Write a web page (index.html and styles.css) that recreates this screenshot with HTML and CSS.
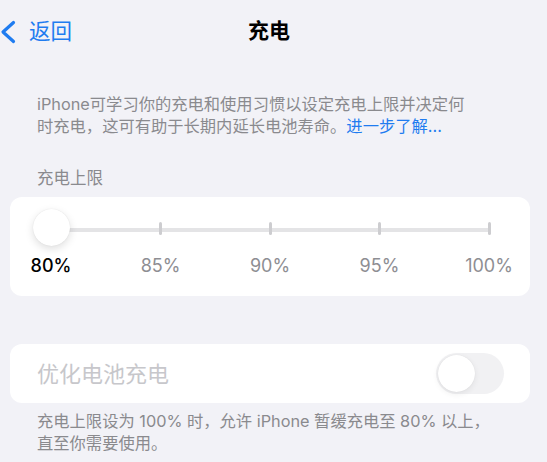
FILE: index.html
```html
<!DOCTYPE html>
<html lang="zh-CN">
<head>
<meta charset="utf-8">
<title>充电</title>
<link rel="stylesheet" href="styles.css">
</head>
<body>
  <header class="nav">
    <div class="nav-side">
      <a class="back" href="#">
        <svg class="chevron" width="16" height="24" viewBox="0 0 16 24" aria-hidden="true">
          <path d="M13.5 2.5 L3 12 L13.5 21.5" fill="none" stroke="currentColor" stroke-width="3.2" stroke-linecap="round" stroke-linejoin="round"/>
        </svg>
        <span>返回</span>
      </a>
    </div>
    <h1 class="nav-title">充电</h1>
    <div class="nav-side"></div>
  </header>

  <p class="note intro">iPhone可学习你的充电和使用习惯以设定充电上限并决定何<br>时充电，这可有助于长期内延长电池寿命。<a class="link" href="#">进一步了解...</a></p>

  <div class="section-label">充电上限</div>

  <section class="card limit-card">
    <div class="slider">
      <div class="track"></div>
      <span class="tick" style="left:25%"></span>
      <span class="tick" style="left:50%"></span>
      <span class="tick" style="left:75%"></span>
      <span class="tick" style="left:100%"></span>
      <span class="thumb"></span>
    </div>
    <div class="stops">
      <span class="stop active"><span>80%</span></span>
      <span class="stop"><span>85%</span></span>
      <span class="stop"><span>90%</span></span>
      <span class="stop"><span>95%</span></span>
      <span class="stop"><span>100%</span></span>
    </div>
  </section>

  <section class="card toggle-card">
    <span class="toggle-label">优化电池充电</span>
    <span class="switch"><span class="switch-knob"></span></span>
  </section>

  <p class="note footer">充电上限设为 100% 时，允许 iPhone 暂缓充电至 80% 以上，<br>直至你需要使用。</p>
</body>
</html>
```

FILE: styles.css
```css
* {
  box-sizing: border-box;
}

html, body {
  margin: 0;
  padding: 0;
}

body {
  background: #f2f2f7;
  font-family: "Inter", "Noto Sans CJK SC", "Noto Sans", sans-serif;
  color: #000;
  width: 547px;
  height: 462px;
  overflow: hidden;
}

/* navigation bar */
.nav {
  height: 62px;
  display: grid;
  grid-template-columns: 1fr auto 1fr;
  align-items: center;
  padding-right: 9px;
}

.nav-side {
  display: flex;
  align-items: center;
}

.back {
  display: flex;
  align-items: center;
  gap: 13px;
  color: #1f7cf0;
  text-decoration: none;
  font-size: 21.5px;
  line-height: 26px;
}

.chevron {
  display: block;
  margin-top: 1px;
}

.nav-title {
  margin: 0;
  font-size: 21px;
  font-weight: 700;
  line-height: 26px;
}

/* grey explanatory text */
.note {
  margin: 0;
  padding: 0 37px;
  font-size: 16.3px;
  line-height: 22px;
  color: #8a8a8e;
}

.intro {
  margin-top: 31px;
}

.link {
  color: #1f7cf0;
  text-decoration: none;
}

.section-label {
  margin-top: 30px;
  padding: 0 37px;
  font-size: 16.5px;
  line-height: 22px;
  color: #8a8a8e;
}

.card {
  background: #fff;
  border-radius: 12px;
  margin: 0 17px 0 10px;
}

/* charge limit slider */
.limit-card {
  margin-top: 8px;
  padding: 12px 41px 19px;
}

.slider {
  position: relative;
  height: 37px;
}

.track {
  position: absolute;
  left: 0;
  right: 0;
  top: 19px;
  height: 4px;
  background: #e4e4e6;
}

.tick {
  position: absolute;
  top: 13px;
  width: 3px;
  height: 13px;
  margin-left: -1.5px;
  border-radius: 1.5px;
  background: #cdcdd0;
}

.thumb {
  position: absolute;
  left: -18.5px;
  top: 0;
  width: 37px;
  height: 37px;
  border-radius: 50%;
  background: #fff;
  box-shadow: 0 3px 8px rgba(0, 0, 0, 0.13), 0 0 1px rgba(0, 0, 0, 0.12);
}

.stops {
  margin-top: 9px;
  display: flex;
  justify-content: space-between;
  font-size: 18px;
  line-height: 22px;
  color: #8e8e93;
}

.stop {
  width: 0;
  display: flex;
  justify-content: center;
  white-space: nowrap;
}

.stop.active {
  color: #000;
  font-weight: 500;
}

/* optimised charging row (disabled) */
.toggle-card {
  margin-top: 48px;
  height: 59px;
  padding: 0 26px 0 27px;
  display: flex;
  align-items: center;
  justify-content: space-between;
}

.toggle-label {
  font-size: 22px;
  line-height: 26px;
  color: #c7c7cb;
}

.switch {
  position: relative;
  width: 68px;
  height: 41px;
  border-radius: 21px;
  background: #f1f1f3;
}

.switch-knob {
  position: absolute;
  left: 2px;
  top: 2px;
  width: 37px;
  height: 37px;
  border-radius: 50%;
  background: #fff;
  box-shadow: 0 2px 6px rgba(0, 0, 0, 0.07), 0 0 1px rgba(0, 0, 0, 0.1);
}

.footer {
  margin-top: 7px;
}
```
